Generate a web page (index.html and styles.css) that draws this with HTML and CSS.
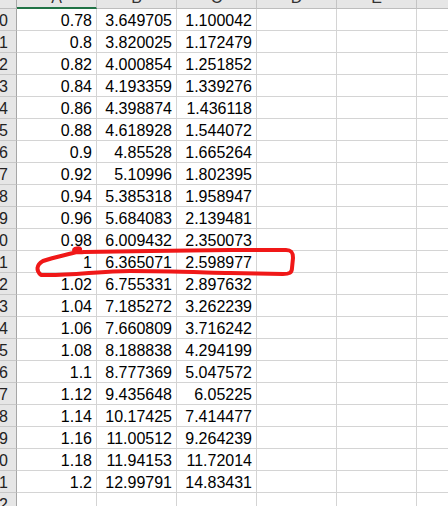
FILE: index.html
```html
<!DOCTYPE html>
<html>
<head>
<meta charset="utf-8">
<link rel="stylesheet" href="styles.css">
</head>
<body>
<div class="sheet">
  <div class="row head">
    <div class="rh corner"></div>
    <div class="ch sel"><span>A</span></div>
    <div class="ch"><span>B</span></div>
    <div class="ch"><span>C</span></div>
    <div class="ch"><span>D</span></div>
    <div class="ch"><span>E</span></div>
    <div class="ch"><span>F</span></div>
  </div>
  <div class="row"><div class="rh">0</div><div class="c">0.78</div><div class="c">3.649705</div><div class="c">1.100042</div><div class="c"></div><div class="c"></div><div class="c"></div></div>
  <div class="row"><div class="rh">1</div><div class="c">0.8</div><div class="c">3.820025</div><div class="c">1.172479</div><div class="c"></div><div class="c"></div><div class="c"></div></div>
  <div class="row"><div class="rh">2</div><div class="c">0.82</div><div class="c">4.000854</div><div class="c">1.251852</div><div class="c"></div><div class="c"></div><div class="c"></div></div>
  <div class="row"><div class="rh">3</div><div class="c">0.84</div><div class="c">4.193359</div><div class="c">1.339276</div><div class="c"></div><div class="c"></div><div class="c"></div></div>
  <div class="row"><div class="rh">4</div><div class="c">0.86</div><div class="c">4.398874</div><div class="c">1.436118</div><div class="c"></div><div class="c"></div><div class="c"></div></div>
  <div class="row"><div class="rh">5</div><div class="c">0.88</div><div class="c">4.618928</div><div class="c">1.544072</div><div class="c"></div><div class="c"></div><div class="c"></div></div>
  <div class="row"><div class="rh">6</div><div class="c">0.9</div><div class="c">4.85528</div><div class="c">1.665264</div><div class="c"></div><div class="c"></div><div class="c"></div></div>
  <div class="row"><div class="rh">7</div><div class="c">0.92</div><div class="c">5.10996</div><div class="c">1.802395</div><div class="c"></div><div class="c"></div><div class="c"></div></div>
  <div class="row"><div class="rh">8</div><div class="c">0.94</div><div class="c">5.385318</div><div class="c">1.958947</div><div class="c"></div><div class="c"></div><div class="c"></div></div>
  <div class="row"><div class="rh">9</div><div class="c">0.96</div><div class="c">5.684083</div><div class="c">2.139481</div><div class="c"></div><div class="c"></div><div class="c"></div></div>
  <div class="row"><div class="rh">0</div><div class="c">0.98</div><div class="c">6.009432</div><div class="c">2.350073</div><div class="c"></div><div class="c"></div><div class="c"></div></div>
  <div class="row"><div class="rh">1</div><div class="c">1</div><div class="c">6.365071</div><div class="c">2.598977</div><div class="c"></div><div class="c"></div><div class="c"></div></div>
  <div class="row"><div class="rh">2</div><div class="c">1.02</div><div class="c">6.755331</div><div class="c">2.897632</div><div class="c"></div><div class="c"></div><div class="c"></div></div>
  <div class="row"><div class="rh">3</div><div class="c">1.04</div><div class="c">7.185272</div><div class="c">3.262239</div><div class="c"></div><div class="c"></div><div class="c"></div></div>
  <div class="row"><div class="rh">4</div><div class="c">1.06</div><div class="c">7.660809</div><div class="c">3.716242</div><div class="c"></div><div class="c"></div><div class="c"></div></div>
  <div class="row"><div class="rh">5</div><div class="c">1.08</div><div class="c">8.188838</div><div class="c">4.294199</div><div class="c"></div><div class="c"></div><div class="c"></div></div>
  <div class="row"><div class="rh">6</div><div class="c">1.1</div><div class="c">8.777369</div><div class="c">5.047572</div><div class="c"></div><div class="c"></div><div class="c"></div></div>
  <div class="row"><div class="rh">7</div><div class="c">1.12</div><div class="c">9.435648</div><div class="c">6.05225</div><div class="c"></div><div class="c"></div><div class="c"></div></div>
  <div class="row"><div class="rh">8</div><div class="c">1.14</div><div class="c">10.17425</div><div class="c">7.414477</div><div class="c"></div><div class="c"></div><div class="c"></div></div>
  <div class="row"><div class="rh">9</div><div class="c">1.16</div><div class="c">11.00512</div><div class="c">9.264239</div><div class="c"></div><div class="c"></div><div class="c"></div></div>
  <div class="row"><div class="rh">0</div><div class="c">1.18</div><div class="c">11.94153</div><div class="c">11.72014</div><div class="c"></div><div class="c"></div><div class="c"></div></div>
  <div class="row"><div class="rh">1</div><div class="c">1.2</div><div class="c">12.99791</div><div class="c">14.83431</div><div class="c"></div><div class="c"></div><div class="c"></div></div>
  <div class="row"><div class="rh">2</div><div class="c"></div><div class="c"></div><div class="c"></div><div class="c"></div><div class="c"></div><div class="c"></div></div>

  <svg class="mark" width="448" height="506" viewBox="0 0 448 506">
    <path d="M41 275 C36 271, 36 265, 43 261 C54 257, 66 255, 77 252 C82 250, 81 247, 75 249 C72 251, 76 253, 84 252 L150 251 L230 250 L286 250 C292 250, 293 253, 293 258 L292 268 C292 273, 289 274, 283 274 L230 273 C190 272, 160 271, 130 271 C100 271, 70 276, 41 275 Z" />
  </svg>
</div>
</body>
</html>
```

FILE: styles.css
```css
html, body {
  margin: 0;
  padding: 0;
  background: #ffffff;
}

body {
  width: 448px;
  height: 506px;
  overflow: hidden;
  font-family: "Liberation Sans", Arial, sans-serif;
  font-size: 16px;
  color: #000000;
}

.sheet {
  position: relative;
  width: 448px;
  height: 506px;
  overflow: hidden;
}

.row {
  display: flex;
  height: 22px;
}

.row.head {
  height: 9px;
}

.rh {
  flex: none;
  width: 17px;
  box-sizing: border-box;
  background: #e6e6e6;
  border-right: 1px solid #a6a6a6;
  border-bottom: 1px solid #c8c8c8;
  color: #222222;
  line-height: 18px;
  padding-top: 3px;
  text-indent: -1px;
  overflow: hidden;
  white-space: nowrap;
}

.corner {
  padding: 0;
  border-bottom: 1px solid #bdbdbd;
}

.ch {
  flex: none;
  width: 80px;
  box-sizing: border-box;
  background: #e6e6e6;
  border-right: 1px solid #c4c4c4;
  border-bottom: 1px solid #bdbdbd;
  overflow: hidden;
  text-align: center;
  color: #333333;
}

.ch span {
  display: block;
  line-height: 18px;
  margin-top: -11px;
}

.ch.sel {
  border-bottom: 2px solid #217346;
}

.c {
  flex: none;
  width: 80px;
  box-sizing: border-box;
  border-right: 1px solid #d4d4d4;
  border-bottom: 1px solid #d4d4d4;
  line-height: 18px;
  padding-top: 3px;
  padding-right: 4px;
  text-align: right;
  white-space: nowrap;
  overflow: hidden;
}

.mark {
  position: absolute;
  left: 0;
  top: 0;
  pointer-events: none;
}

.mark path {
  fill: none;
  stroke: #f01818;
  stroke-width: 4;
  stroke-linecap: round;
  stroke-linejoin: round;
}
```
